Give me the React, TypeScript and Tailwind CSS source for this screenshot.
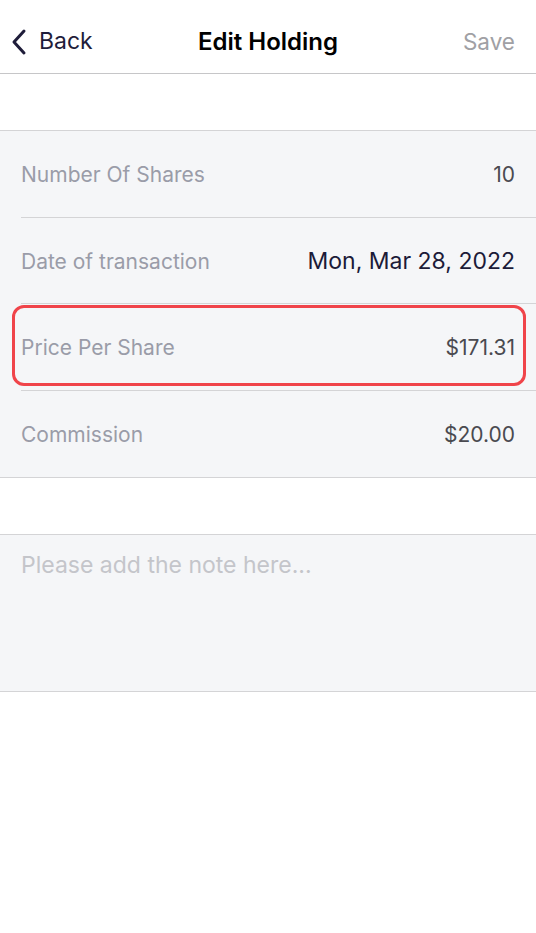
import React from 'react';

const ChevronLeft: React.FC = () => (
  <svg width="16" height="28" viewBox="0 0 16 28" fill="none">
    <path d="M13 3L3 14l10 11" stroke="#1f1d3a" strokeWidth="3" strokeLinecap="round" strokeLinejoin="round" />
  </svg>
);

type Row = { label: string; value: string; big?: boolean; highlight?: boolean };

const rows: Row[] = [
  { label: 'Number Of Shares', value: '10' },
  { label: 'Date of transaction', value: 'Mon, Mar 28, 2022', big: true },
  { label: 'Price Per Share', value: '$171.31', highlight: true },
  { label: 'Commission', value: '$20.00' },
];

const App: React.FC = () => {
  return (
    <div className="min-h-screen w-full bg-white" style={{ fontFamily: 'Inter, "Noto Sans", sans-serif' }}>
      {/* Header */}
      <div className="h-[74px] border-b border-[#c6c6c8] flex items-center justify-between px-[11px] pt-[10px] relative">
        <div className="flex items-center gap-[12px] text-[#1f1d3a] text-[23px]">
          <ChevronLeft />
          <span>Back</span>
        </div>
        <div className="absolute left-0 right-0 text-center text-[24px] font-semibold text-black pointer-events-none">
          Edit Holding
        </div>
        <div className="text-[22.5px] text-[#a0a0a4] pr-[10px]">Save</div>
      </div>

      {/* Spacer */}
      <div className="h-[57px] border-b border-[#d4d4d6]" />

      {/* Fields */}
      <div className="bg-[#f5f6f8] border-b border-[#d4d4d6]">
        {rows.map((r, i) => (
          <div key={r.label} className="relative pl-[21px]">
            <div className={`h-[86.5px] flex items-center justify-between pr-[21px] pt-[2px] ${i < rows.length - 1 ? 'border-b border-[#d4d4d6]' : ''}`}>
              <span className="text-[21px] text-[#9a9ca8]">{r.label}</span>
              <span className={r.big ? 'text-[23px] text-[#1c1b38]' : 'text-[21px] text-[#4a4a50]'}>{r.value}</span>
            </div>
            {r.highlight && (
              <div className="absolute left-[12px] right-[10px] top-[1px] bottom-[5px] border-[3px] border-[#f0444a] rounded-[12px]" />
            )}
          </div>
        ))}
      </div>

      {/* Spacer */}
      <div className="h-[57px] border-b border-[#d4d4d6]" />

      {/* Note */}
      <div className="h-[157px] bg-[#f5f6f8] border-b border-[#d4d4d6] px-[21px] pt-[13px]">
        <div className="text-[23px] text-[#c4c5ca]">Please add the note here...</div>
      </div>
    </div>
  );
};

export default App;
